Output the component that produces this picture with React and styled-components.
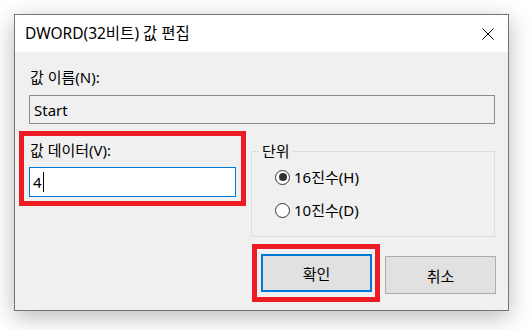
import React from 'react';
import styled, { createGlobalStyle } from 'styled-components';

const GlobalStyle = createGlobalStyle`
  html, body {
    margin: 0;
    padding: 0;
    background: #ffffff;
  }
  body {
    font-family: 'Noto Sans', 'Noto Sans CJK KR', sans-serif;
    font-size: 15px;
    color: #000;
  }
`

const Page = styled.div`
  width: 532px;
  height: 330px;
  padding: 14px 0 0 14px;
  box-sizing: border-box;
  overflow: hidden;
`

const Window = styled.div`
  width: 495px;
  height: 297px;
  box-sizing: border-box;
  border: 1px solid #747474;
  background: #f0f0f0;
  box-shadow: 0 6px 22px rgba(0, 0, 0, 0.28);
  display: flex;
  flex-direction: column;
`

const TitleBar = styled.div`
  height: 37px;
  background: #ffffff;
  display: flex;
  align-items: center;
  justify-content: space-between;
  padding: 0 14px 0 10px;
  line-height: 20px;
`

const Title = styled.span`
  font-size: 15.5px;
  margin-top: -2px;
`

const Body = styled.div`
  flex: 1;
  display: flex;
  flex-direction: column;
  padding: 15px 13px 0 14px;
`

const Label = styled.div`
  line-height: 20px;
  height: 20px;
  padding-left: 1px;
`

const ReadOnlyBox = styled.div`
  margin-top: 8px;
  height: 29px;
  box-sizing: border-box;
  border: 1px solid #8c8c8c;
  background: #f0f0f0;
  display: flex;
  align-items: center;
  padding-left: 4px;
`

const MiddleRow = styled.div`
  display: flex;
  align-items: flex-start;
  margin-top: 7px;
  margin-left: -10px;
`

const RedFrame = styled.div`
  border: 5px solid #ed1c24;
  box-sizing: border-box;
  width: ${p => p.w}px;
  height: ${p => p.h}px;
  padding: ${p => p.pad};
  display: flex;
  flex-direction: column;
`

const EditBox = styled.div`
  margin-top: 7px;
  height: 30px;
  box-sizing: border-box;
  border: 1px solid #0078d7;
  background: #ffffff;
  display: flex;
  align-items: center;
  padding-left: 3px;
`

const Caret = styled.span`
  display: inline-block;
  width: 1px;
  height: 20px;
  background: #000;
  margin-left: 1px;
`

const Group = styled.fieldset`
  flex: 1;
  margin: 11px 0 0 5px;
  height: 95px;
  box-sizing: border-box;
  border: 1px solid #dcdcdc;
  padding: 0 0 0 23px;
  display: flex;
  flex-direction: column;
`

const Legend = styled.legend`
  padding: 0 3px;
  margin-left: -16px;
  line-height: 18px;
`

const RadioRow = styled.div`
  display: flex;
  align-items: center;
  gap: 4px;
  height: 20px;
  margin-top: ${p => p.top}px;
  line-height: 20px;
`

const RadioCircle = styled.span`
  width: 15px;
  height: 15px;
  box-sizing: border-box;
  border: 1px solid #333333;
  border-radius: 50%;
  background: #ffffff;
  display: flex;
  align-items: center;
  justify-content: center;
  &::after {
    content: '';
    width: 8px;
    height: 8px;
    border-radius: 50%;
    background: ${p => p.checked ? '#333333' : 'transparent'};
  }
`

const ButtonRow = styled.div`
  display: flex;
  justify-content: flex-end;
  align-items: flex-start;
  gap: 5px;
  margin-top: 7px;
  margin-right: -1px;
`

const Button = styled.div`
  width: 111px;
  height: 38px;
  box-sizing: border-box;
  background: #e1e1e1;
  border: ${p => p.primary ? '2px solid #0078d7' : '1px solid #adadad'};
  display: flex;
  align-items: center;
  justify-content: center;
  margin-top: ${p => p.primary ? 0 : 12}px;
`

const CloseIcon = () => (
  <svg width="12" height="12" viewBox="0 0 12 12">
    <path d="M0.5 0.5 L11.5 11.5 M11.5 0.5 L0.5 11.5" stroke="#000" strokeWidth="1" fill="none" />
  </svg>
)

const App = () => {
  return (
    <>
      <GlobalStyle />
      <Page>
        <Window>
          <TitleBar>
            <Title>DWORD(32비트) 값 편집</Title>
            <CloseIcon />
          </TitleBar>
          <Body>
            <Label>값 이름(N):</Label>
            <ReadOnlyBox>Start</ReadOnlyBox>

            <MiddleRow>
              <RedFrame w={227} h={75} pad="4px 5px 4px 5px">
                <Label>값 데이터(V):</Label>
                <EditBox>4<Caret /></EditBox>
              </RedFrame>
              <Group>
                <Legend>단위</Legend>
                <RadioRow top={7}>
                  <RadioCircle checked />
                  <span>16진수(H)</span>
                </RadioRow>
                <RadioRow top={13}>
                  <RadioCircle />
                  <span>10진수(D)</span>
                </RadioRow>
              </Group>
            </MiddleRow>

            <ButtonRow>
              <RedFrame w={128} h={58} pad="5px 4px">
                <Button primary>확인</Button>
              </RedFrame>
              <Button>취소</Button>
            </ButtonRow>
          </Body>
        </Window>
      </Page>
    </>
  )
}

export default App;
